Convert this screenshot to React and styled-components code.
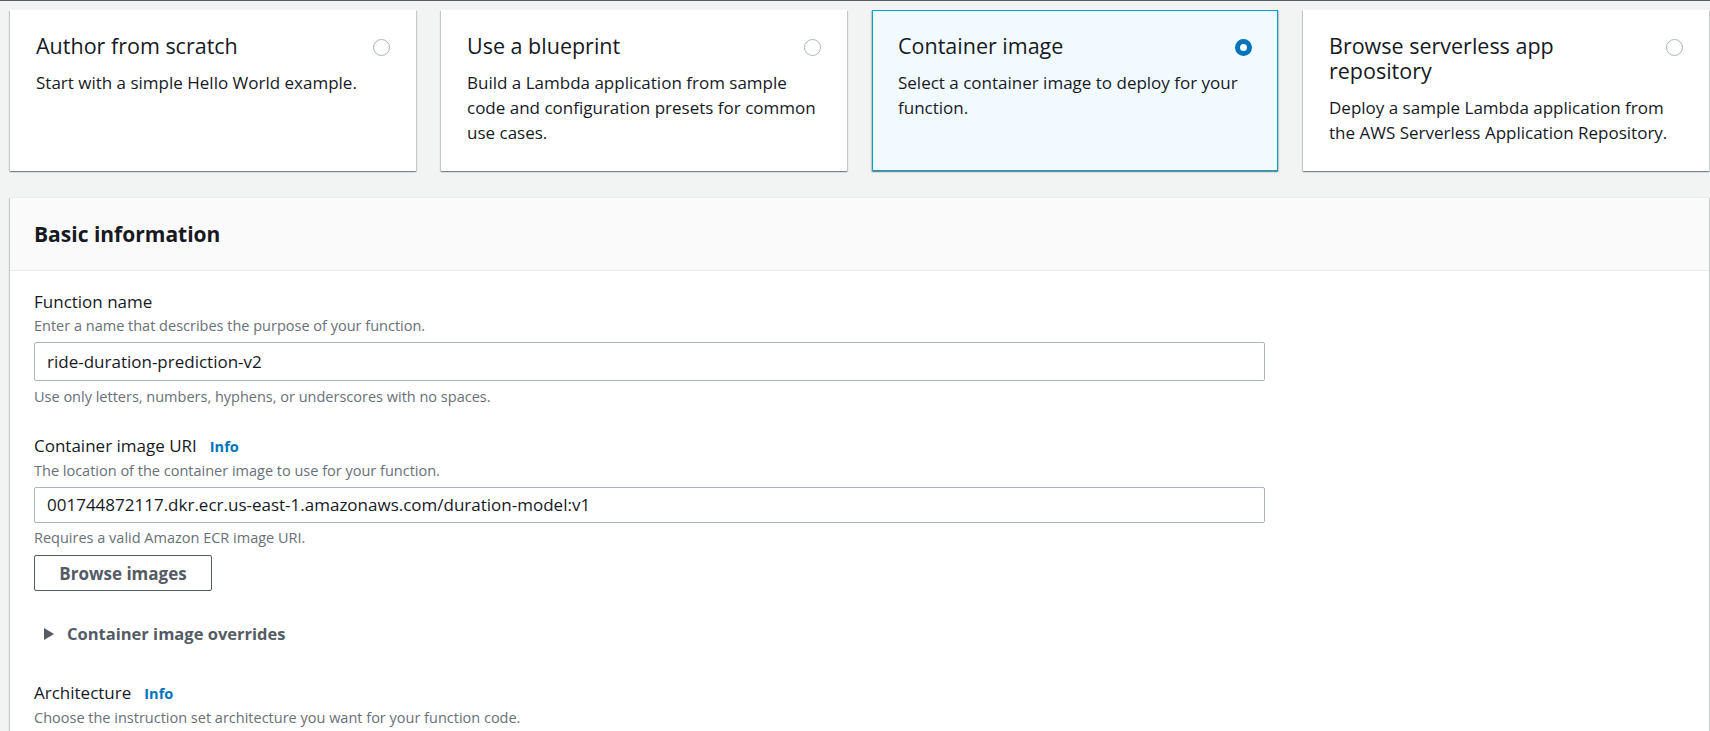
import React, { useState } from "react";
import styled, { createGlobalStyle } from "styled-components";

const GlobalStyle = createGlobalStyle`
  html, body {
    margin: 0;
    padding: 0;
    overflow: hidden;
    background: #f2f3f3;
  }

  body {
    font-family: "Open Sans", "Noto Sans", sans-serif;
    color: #16191f;
  }

  * {
    box-sizing: border-box;
  }
`;

const Page = styled.div`
  border-top: 1px solid #545b64;
  padding: 9px 1px 0 10px;
  min-height: 731px;
`;

const TileGrid = styled.div`
  display: grid;
  grid-template-columns: repeat(4, 1fr);
  gap: 25px;
`;

const Tile = styled.div`
  display: flex;
  flex-direction: column;
  padding: 22px 25px 25px 25px;
  background: ${(p) => (p.$active ? "#f1faff" : "#ffffff")};
  border: 1px solid ${(p) => (p.$active ? "#00a1c9" : "transparent")};
  box-shadow: 0 1px 1px 0 rgba(0, 28, 36, 0.3), 1px 1px 1px 0 rgba(0, 28, 36, 0.15),
    -1px 1px 1px 0 rgba(0, 28, 36, 0.15);
  cursor: pointer;
`;

const TileHead = styled.div`
  display: flex;
  align-items: flex-start;
  gap: 30px;
`;

const TileTitle = styled.div`
  flex: 1;
  font-size: 21.5px;
  line-height: 25px;
`;

const Radio = styled.span`
  flex-shrink: 0;
  width: 17px;
  height: 17px;
  margin-top: 6px;
  border-radius: 50%;
  background: #fff;
  border: ${(p) => (p.$checked ? "5px solid #0073bb" : "1.5px solid #aab7b8")};
`;

const TileText = styled.div`
  margin-top: 12px;
  font-size: 17px;
  line-height: 25px;
`;

const Panel = styled.section`
  margin-top: 26px;
  background: #fff;
  border-top: 1px solid #eaeded;
  box-shadow: 0 1px 1px 0 rgba(0, 28, 36, 0.3), 1px 1px 1px 0 rgba(0, 28, 36, 0.15),
    -1px 1px 1px 0 rgba(0, 28, 36, 0.15);
`;

const PanelHeader = styled.div`
  padding: 23px 24px;
  background: #fafafa;
  border-bottom: 1px solid #eaeded;

  h2 {
    margin: 0;
    font-size: 21px;
    line-height: 26px;
    font-weight: 700;
  }
`;

const PanelBody = styled.div`
  display: flex;
  flex-direction: column;
  padding: 20px 24px 40px;
`;

const Field = styled.div`
  display: flex;
  flex-direction: column;
  align-items: flex-start;
  margin-top: ${(p) => p.$top || 0}px;
`;

const Label = styled.div`
  font-size: 17px;
  line-height: 22px;
  color: #16191f;
`;

const InfoLink = styled.a`
  margin-left: 13px;
  font-size: 14.5px;
  font-weight: 700;
  color: #0073bb;
  text-decoration: none;
  cursor: pointer;
`;

const Description = styled.div`
  margin-top: 4px;
  font-size: 14.5px;
  line-height: 18px;
  color: #687078;
`;

const TextInput = styled.input`
  margin-top: 7px;
  width: 1231px;
  height: ${(p) => p.$h}px;
  padding: 0 12px;
  border: 1px solid #aab7b8;
  border-radius: 2px;
  background: #fff;
  font-family: inherit;
  font-size: 17px;
  color: #16191f;
  outline: none;
`;

const Hint = styled(Description)`
  margin-top: 6.5px;
`;

const OutlineButton = styled.button`
  margin-top: 8px;
  width: 178px;
  height: 36px;
  border: 1px solid #545b64;
  border-radius: 2px;
  background: #fff;
  font-family: inherit;
  font-size: 17px;
  font-weight: 700;
  color: #545b64;
  cursor: pointer;
`;

const Expander = styled.div`
  display: flex;
  align-items: center;
  gap: 13px;
  margin-top: 32px;
  padding-left: 10px;
  font-size: 16.5px;
  line-height: 22px;
  font-weight: 700;
  color: #545b64;
  cursor: pointer;
`;

const tiles = [
  { id: "scratch", title: "Author from scratch", text: "Start with a simple Hello World example." },
  {
    id: "blueprint",
    title: "Use a blueprint",
    text: "Build a Lambda application from sample code and configuration presets for common use cases.",
  },
  { id: "container", title: "Container image", text: "Select a container image to deploy for your function." },
  {
    id: "sar",
    title: "Browse serverless app repository",
    text: "Deploy a sample Lambda application from the AWS Serverless Application Repository.",
  },
];

const App = () => {
  const [selected, setSelected] = useState("container");

  return (
    <>
      <GlobalStyle />
      <Page>
        <TileGrid>
          {tiles.map((tile) => (
            <Tile key={tile.id} $active={selected === tile.id} onClick={() => setSelected(tile.id)}>
              <TileHead>
                <TileTitle>{tile.title}</TileTitle>
                <Radio $checked={selected === tile.id} />
              </TileHead>
              <TileText>{tile.text}</TileText>
            </Tile>
          ))}
        </TileGrid>

        <Panel>
          <PanelHeader>
            <h2>Basic information</h2>
          </PanelHeader>
          <PanelBody>
            <Field>
              <Label>Function name</Label>
              <Description>Enter a name that describes the purpose of your function.</Description>
              <TextInput $h={39} value="ride-duration-prediction-v2" readOnly />
              <Hint>Use only letters, numbers, hyphens, or underscores with no spaces.</Hint>
            </Field>

            <Field $top={29}>
              <Label>
                Container image URI<InfoLink>Info</InfoLink>
              </Label>
              <Description>The location of the container image to use for your function.</Description>
              <TextInput $h={36} value="001744872117.dkr.ecr.us-east-1.amazonaws.com/duration-model:v1" readOnly />
              <Hint>Requires a valid Amazon ECR image URI.</Hint>
              <OutlineButton>Browse images</OutlineButton>
            </Field>

            <Expander>
              <svg width="10" height="12" viewBox="0 0 10 12">
                <path d="M0 0 L10 6 L0 12 Z" fill="#545b64" />
              </svg>
              Container image overrides
            </Expander>

            <Field $top={37}>
              <Label>
                Architecture<InfoLink>Info</InfoLink>
              </Label>
              <Description>Choose the instruction set architecture you want for your function code.</Description>
            </Field>
          </PanelBody>
        </Panel>
      </Page>
    </>
  );
};

export default App;
